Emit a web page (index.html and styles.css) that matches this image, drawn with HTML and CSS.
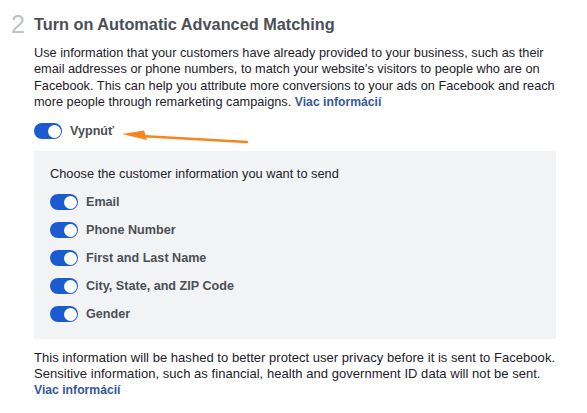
FILE: index.html
```html
<!DOCTYPE html>
<html>
<head>
<meta charset="utf-8">
<link rel="stylesheet" href="styles.css">
</head>
<body>
<div class="step">
  <div class="num">2</div>
  <div class="content">
    <h2 class="title">Turn on Automatic Advanced Matching</h2>
    <p class="desc">Use information that your customers have already provided to your business, such as their email addresses or phone numbers, to match your website's visitors to people who are on Facebook. This can help you attribute more conversions to your ads on Facebook and reach more people through remarketing campaigns. <a class="link" href="#">Viac informácií</a></p>
    <div class="master">
      <span class="toggle"><span class="knob"></span></span>
      <span class="label">Vypnúť</span>
      <svg class="arrow" width="130" height="28" viewBox="0 0 130 28">
        <path d="M20 17 L126 23" stroke="#f7851d" stroke-width="2.4" stroke-linecap="round" fill="none"/>
        <path d="M1 15 L23 11.5 L26 21 Z" fill="#f7851d"/>
      </svg>
    </div>
    <div class="box">
      <div class="choose">Choose the customer information you want to send</div>
      <div class="row"><span class="toggle"><span class="knob"></span></span><span class="label">Email</span></div>
      <div class="row"><span class="toggle"><span class="knob"></span></span><span class="label">Phone Number</span></div>
      <div class="row"><span class="toggle"><span class="knob"></span></span><span class="label">First and Last Name</span></div>
      <div class="row"><span class="toggle"><span class="knob"></span></span><span class="label">City, State, and ZIP Code</span></div>
      <div class="row"><span class="toggle"><span class="knob"></span></span><span class="label">Gender</span></div>
    </div>
    <p class="note">This information will be hashed to better protect user privacy before it is sent to Facebook. Sensitive information, such as financial, health and government ID data will not be sent. <br><a class="link" href="#">Viac informácií</a></p>
  </div>
</div>
</body>
</html>
```

FILE: styles.css
```css
html, body {
  margin: 0;
  padding: 0;
  background: #ffffff;
}
body {
  font-family: "Liberation Sans", Arial, Helvetica, sans-serif;
  color: #1d2129;
}
.step {
  display: flex;
  padding: 12px 0 0 11px;
}
.num {
  width: 23px;
  font-size: 25px;
  line-height: 25px;
  color: #bec3c9;
  font-weight: 300;
}
.content {
  width: 522px;
}
.title {
  margin: 0;
  font-size: 16.3px;
  line-height: 24px;
  font-weight: bold;
  color: #4b4f56;
}
.desc {
  margin: 9px 0 0 0;
  font-size: 12.75px;
  line-height: 16.3px;
  color: #1d2129;
}
.link {
  color: #365899;
  font-weight: bold;
  text-decoration: none;
}
.desc .link {
  font-size: 12.2px;
}
.master {
  position: relative;
  display: flex;
  align-items: center;
  gap: 8px;
  margin-top: 13px;
  height: 16px;
}
.arrow {
  position: absolute;
  left: 87px;
  top: -4px;
}
.toggle {
  position: relative;
  display: inline-block;
  width: 28px;
  height: 16px;
  border-radius: 8px;
  background: #1a5bd0;
  flex: none;
}
.knob {
  position: absolute;
  right: 1.5px;
  top: 1.5px;
  width: 13px;
  height: 13px;
  border-radius: 50%;
  background: #ffffff;
}
.label {
  font-size: 12.6px;
  font-weight: bold;
  color: #4b4f56;
}
.box {
  margin-top: 12px;
  background: #f2f3f5;
  padding: 15px 16px 17px 16px;
  display: flex;
  flex-direction: column;
  gap: 12px;
}
.choose {
  font-size: 12.8px;
  line-height: 16px;
  color: #1d2129;
}
.row {
  display: flex;
  align-items: center;
  gap: 8px;
  height: 16px;
}
.note {
  margin: 11px 0 0 0;
  font-size: 13px;
  line-height: 16px;
  letter-spacing: 0.04px;
  color: #1d2129;
}
.note .link {
  font-size: 12.2px;
  letter-spacing: 0;
}
```
